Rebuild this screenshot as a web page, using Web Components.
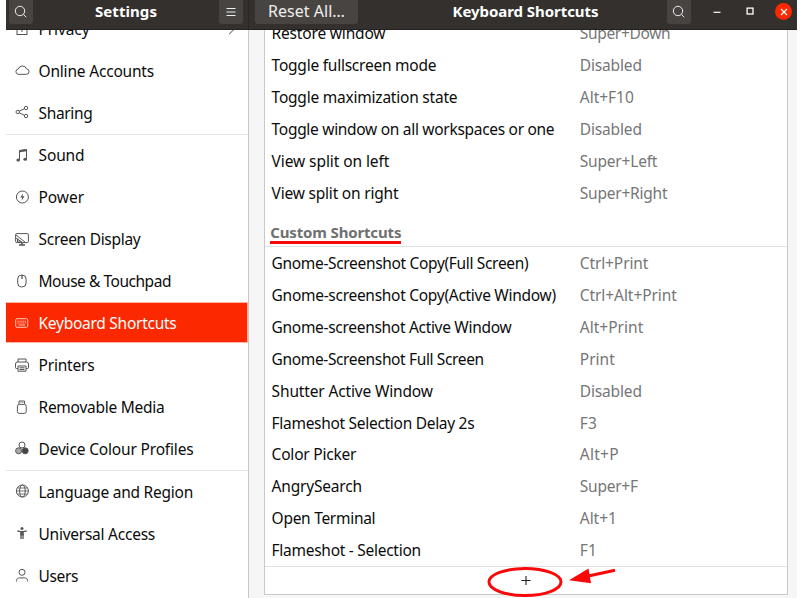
<!DOCTYPE html>
<html lang="en">
<head>
<meta charset="utf-8">
<title>Settings</title>
<style>
html,body{margin:0;height:100%;background:#fff;overflow:hidden}
body{font:15.5px/20px "Noto Sans","Open Sans",sans-serif;color:#0c0c0c}
</style>
</head>
<body>
<settings-window></settings-window>
<script>
const ICONS = {
  search:'<circle cx="7" cy="7" r="4.7"/><path d="M10.5 10.5l2.7 2.7"/>',
  menu:'<path d="M3.5 4.5h9M3.5 8h9M3.5 11.5h9"/>',
  lock:'<rect x="3" y="6" width="10" height="8.5"/><path d="M5 6V4a3 3 0 0 1 6 0v2M8 10v2"/>',
  cloud:'<path d="M4 12.3h8.2a2.7 2.7 0 0 0 .3-5.4A4.3 4.3 0 0 0 4.3 7 2.7 2.7 0 0 0 4 12.3z"/>',
  share:'<circle cx="3.7" cy="8" r="1.7"/><circle cx="12" cy="4" r="1.7"/><circle cx="12" cy="12" r="1.7"/><path d="M5.2 7.2l5.2-2.5M5.2 8.8l5.2 2.5"/>',
  sound:'<path d="M5.5 13V3.5l7-1V12"/><path d="M5.5 4.2l7-1" stroke-width="2"/><ellipse cx="4.2" cy="13" rx="1.8" ry="1.5" fill="currentColor" stroke="none"/><ellipse cx="11.2" cy="12.2" rx="1.8" ry="1.5" fill="currentColor" stroke="none"/>',
  power:'<circle cx="8.4" cy="8" r="6"/><path d="M9 4.4L6.2 8.5h2l-.6 3.2 2.9-4.4h-2z" fill="currentColor" stroke="none"/>',
  display:'<rect x="1.6" y="2.6" width="12.8" height="9" rx="1.2"/><path d="M5 14h6M8 12v2" stroke-width="1.6"/><path d="M2 4l9.5 7.5M2 7l6 4.5M3.5 8v3h4z"/>',
  mouse:'<rect x="3.7" y="2" width="8.4" height="12" rx="4"/><path d="M8 2v4" stroke-width="1.3"/>',
  keyboard:'<rect x="1.7" y="3.7" width="12" height="8.6" rx="1.3"/><path d="M3.5 6.2h8.5M3.5 8h8.5" stroke-dasharray="1.2 .7"/><path d="M4.5 10h6.5"/>',
  printer:'<path d="M4 5V2h8v3M4 11.5H2.5a1 1 0 0 1-1-1V7a2 2 0 0 1 2-2h9a2 2 0 0 1 2 2v3.5a1 1 0 0 1-1 1H12M4 9h8v5.2H4z"/><path d="M5.5 10.8h5M5.5 12.5h5"/>',
  media:'<rect x="3.4" y="5.4" width="8.8" height="9" rx="1.8"/><path d="M5 5V2h5.6v3M6.5 3.4h.8M8.5 3.4h.8"/>',
  colour:'<circle cx="8" cy="5" r="3"/><circle cx="4.6" cy="10.8" r="3" fill="#aaa"/><circle cx="11.2" cy="10.8" r="3" fill="#444"/>',
  globe:'<circle cx="8.4" cy="8" r="6"/><ellipse cx="8.4" cy="8" rx="2.8" ry="6"/><path d="M2.4 8h12M3.3 5h10.2M3.3 11h10.2" stroke-width=".8"/>',
  access:'<circle cx="8" cy="3.5" r="1.5" fill="currentColor" stroke="none"/><path d="M3.4 6l3.1.7h3l3.1-.7M7 8.5V14M9 8.5V14" stroke-width="1.3"/><path d="M6.3 6h3.4v4.5H6.3z" fill="currentColor" stroke="none"/>',
  user:'<circle cx="8" cy="5.3" r="3"/><path d="M2.4 14.5v-.8c0-1.8 1.4-2.8 3.2-2.8h4.8c1.8 0 3.2 1 3.2 2.8v.8"/>',
  minimise:'<path d="M4.5 9.3h7" stroke-width="1.2"/>',
  maximise:'<rect x="5.1" y="5.1" width="5.9" height="5.9" stroke-width="1.3"/>',
  close:'<path d="M5 5l6 6M11 5l-6 6" stroke-width="1.3"/>',
  plus:'<path d="M8 3.9v9.2M3.4 8.5h9.2" stroke-width="1.1"/>'
};

class GlyphIcon extends HTMLElement {
  connectedCallback() {
    this.attachShadow({mode:'open'}).innerHTML = `<style>
      :host{display:block;width:16px;height:16px;flex:none}
      svg{display:block;width:100%;height:100%;fill:none;stroke:currentColor;stroke-width:1}
    </style><svg viewBox="0 0 16 16">${ICONS[this.getAttribute('name')]}</svg>`;
  }
}

/* One line of text whose tracking is set so that it takes the given width. */
class FitText extends HTMLElement {
  connectedCallback() {
    this.attachShadow({mode:'open'}).innerHTML = `<style>
      :host{display:block;white-space:nowrap;flex:none}
      span{display:inline-block;font-kerning:normal}
    </style><span><slot></slot></span>`;
    const span = this.shadowRoot.querySelector('span');
    const width = +this.getAttribute('w');
    const gap = (width - span.getBoundingClientRect().width) / this.textContent.length;
    span.style.letterSpacing = gap.toFixed(3) + 'px';
  }
}

class SideRow extends HTMLElement {
  connectedCallback() {
    this.attachShadow({mode:'open'}).innerHTML = `<style>
      :host{box-sizing:border-box;display:flex;align-items:center;gap:8.5px;height:41.95px;padding:0 15px 0 8px;flex:none}
      glyph-icon{color:#555;margin-bottom:1.4px}
      ::slotted(fit-text){padding-bottom:.3px}
      :host([selected]){background:#fb2800;color:#fff;border:1px solid #ffb7a4;border-left:0;padding-right:10px;
        height:40.95px;margin-bottom:1px;margin-right:.5px}
      :host([selected]) glyph-icon{color:#ffc9bd;margin-bottom:0}
      .more{width:6px;height:6px;margin:2px 0 0 auto;border:solid #777;border-width:1px 1px 0 0;transform:rotate(45deg)}
      :host(:not([more])) .more{display:none}
    </style><glyph-icon name="${this.getAttribute('icon')}"></glyph-icon><slot></slot><i class="more"></i>`;
  }
}

class SideBar extends HTMLElement {
  connectedCallback() {
    const row = ([icon, text, w, flags='']) =>
      icon ? `<side-row icon="${icon}" ${flags}><fit-text w="${w}">${text}</fit-text></side-row>` : '<hr>';
    this.attachShadow({mode:'open'}).innerHTML = `<style>
      :host{display:block;box-sizing:border-box;width:243px;overflow:hidden;border-right:1px solid #c8c8c8;background:#fff}
      nav{display:flex;flex-direction:column;margin-top:-21.7px}
      hr{width:100%;height:1px;margin:0;border:0;background:#e4e4e4;flex:none}
    </style><nav>${[
      ['lock','Privacy',51,'more'],['cloud','Online Accounts',115.5],['share','Sharing',54],[],
      ['sound','Sound',46],['power','Power',45.5],['display','Screen Display',102],['mouse','Mouse &amp; Touchpad',132.5],
      ['keyboard','Keyboard Shortcuts',138,'selected'],['printer','Printers',56],['media','Removable Media',126],
      ['colour','Device Colour Profiles',155],[],
      ['globe','Language and Region',154.5],['access','Universal Access',116.5],['user','Users',39.5]
    ].map(row).join('')}</nav>`;
  }
}

class HeaderButton extends HTMLElement {
  connectedCallback() {
    this.attachShadow({mode:'open'}).innerHTML = `<style>
      :host{display:flex;align-items:center;justify-content:center;box-sizing:border-box;width:24px;height:24px;
        background:#484442;border-radius:0 0 3px 3px;color:#eee;flex:none}
    </style><slot></slot>`;
  }
}

class HeaderBar extends HTMLElement {
  connectedCallback() {
    this.attachShadow({mode:'open'}).innerHTML = `<style>
      :host{display:flex;box-sizing:border-box;height:29.5px;background:#33302e;border-bottom:1.5px solid #242120;color:#fff}
      section{display:flex;align-items:flex-start;box-sizing:border-box}
      .left{width:243px;justify-content:space-between;padding:0 5px 0 3px;border-right:1px solid #292624}
      .right{flex:1;padding-left:6px;min-width:0}
      glyph-icon{position:relative;top:-.5px}
      fit-text{line-height:22px;padding-top:0}
      .title{font-weight:700;font-size:15px}
      .reset{width:103px}
      .reset fit-text{line-height:23px;padding-bottom:1px;color:#f0eeed;font-size:16px}
      .right .title{margin-left:94.5px}
      .find{margin-left:68.5px}
      .min{margin:3.5px 0 0 18px}
      .max{margin:3.5px 0 0 17px}
      .x{display:flex;justify-content:center;align-items:center;width:17px;height:17px;margin:3px 0 0 17px;border-radius:50%;background:#fb2800}
      .x glyph-icon{top:0}
    </style>
    <section class="left">
      <header-button><glyph-icon name="search"></glyph-icon></header-button>
      <fit-text class="title" w="62">Settings</fit-text>
      <header-button><glyph-icon name="menu"></glyph-icon></header-button>
    </section>
    <section class="right">
      <header-button class="reset"><fit-text w="77">Reset All…</fit-text></header-button>
      <fit-text class="title" w="146">Keyboard Shortcuts</fit-text>
      <header-button class="find"><glyph-icon name="search"></glyph-icon></header-button>
      <glyph-icon class="min" name="minimise"></glyph-icon>
      <glyph-icon class="max" name="maximise"></glyph-icon>
      <span class="x"><glyph-icon name="close"></glyph-icon></span>
    </section>`;
  }
}

class ShortcutRow extends HTMLElement {
  connectedCallback() {
    this.attachShadow({mode:'open'}).innerHTML = `<style>
      :host{display:grid;grid-template-columns:308.2px 1fr;align-items:center;height:31.84px;padding-left:6.6px}
      ::slotted(fit-text){padding-top:.5px}
      .value{color:#767676}
    </style><slot name="name"></slot><div class="value"><slot name="keys"></slot></div>`;
  }
}

class ShortcutList extends HTMLElement {
  connectedCallback() {
    const row = ([a, aw, b, bw]) => `<shortcut-row><fit-text slot="name" w="${aw - .8}">${a}</fit-text><fit-text slot="keys" w="${bw - .5}">${b}</fit-text></shortcut-row>`;
    this.attachShadow({mode:'open'}).innerHTML = `<style>
      :host{display:block;box-sizing:border-box;flex:1;background:#f6f6f6;overflow:hidden;padding:0 9px 0 15px}
      .list{box-sizing:border-box;height:565px;border:1px solid #c8c8c8;border-top:0;background:#fff}
      .scroll{overflow:hidden}
      .first{margin-top:-12.2px}
      .group{box-sizing:border-box;height:39px;padding:13px 0 0 5.3px;border-bottom:1px solid #e2e2e2;font-size:15px;font-weight:700;color:#707070}
      .group fit-text{box-sizing:border-box;width:131px;height:22.5px;line-height:22px;border-bottom:3px solid #f50a0a}
      .add{position:relative;display:flex;justify-content:center;align-items:center;height:27px;border-top:1px solid #e2e2e2;color:#222}
      .mark{position:absolute;left:218px;top:-6px;width:140px;height:40px;overflow:visible}
    </style>
    <div class="list">
      <div class="scroll">
      <div class="first">${[
        ['Restore window',114.5,'Super+Down',91],['Toggle fullscreen mode',165.5,'Disabled',62.5],
        ['Toggle maximization state',186.5,'Alt+F10',54.5],['Toggle window on all workspaces or one',283.5,'Disabled',62.5],
        ['View split on left',118.5,'Super+Left',78],['View split on right',127.5,'Super+Right',88]
      ].map(row).join('')}</div>
      <div class="group"><fit-text w="131">Custom Shortcuts</fit-text></div>
      <div class="rows">${[
        ['Gnome-Screenshot Copy(Full Screen)',257.5,'Ctrl+Print',69],['Gnome-screenshot Copy(Active Window)',285,'Ctrl+Alt+Print',97.5],
        ['Gnome-screenshot Active Window',240.5,'Alt+Print',64],['Gnome-Screenshot Full Screen',213,'Print',35.5],
        ['Shutter Active Window',162,'Disabled',62.5],['Flameshot Selection Delay 2s',203.5,'F3',18],
        ['Color Picker',85.5,'Alt+P',39.5],['AngrySearch',91,'Super+F',58.5],
        ['Open Terminal',104.5,'Alt+1',37.5],['Flameshot - Selection',150,'F1',18]
      ].map(row).join('')}</div>
      </div>
      <div class="add"><glyph-icon name="plus"></glyph-icon>
        <svg class="mark" viewBox="483 560 140 40" fill="none" stroke="#fa0808">
          <ellipse cx="525" cy="581" rx="36" ry="13.5" stroke-width="3"/>
          <path d="M586 575.5L615 569.2" stroke-width="3.2"/>
          <path d="M569 579.2L588.5 567.5L591 582.3z" fill="#fa0808" stroke="none"/>
        </svg>
      </div>
    </div>`;
  }
}

class SettingsWindow extends HTMLElement {
  connectedCallback() {
    this.attachShadow({mode:'open'}).innerHTML = `<style>
      :host{display:flex;flex-direction:column;height:100vh;margin:0 5px 0 6px}
      main{display:flex;flex:1;min-height:0}
    </style><header-bar></header-bar><main><side-bar></side-bar><shortcut-list></shortcut-list></main>`;
  }
}

for (const [tag, cls] of [['glyph-icon',GlyphIcon],['fit-text',FitText],['header-button',HeaderButton],['side-row',SideRow],
  ['shortcut-row',ShortcutRow],['side-bar',SideBar],['shortcut-list',ShortcutList],['header-bar',HeaderBar],['settings-window',SettingsWindow]])
  customElements.define(tag, cls);
</script>
</body>
</html>
